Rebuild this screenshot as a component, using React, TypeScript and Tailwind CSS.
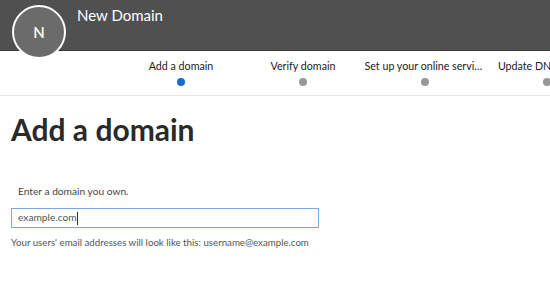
import React from "react";

const steps = [
  { label: "Add a domain", active: true },
  { label: "Verify domain", active: false },
  { label: "Set up your online services", active: false },
  { label: "Update DNS settings", active: false },
];

export default function App() {
  return (
    <div
      className="w-[550px] h-[281px] overflow-hidden bg-white text-[#333]"
      style={{ fontFamily: 'Lato, "Noto Sans", sans-serif' }}
    >
      <div className="relative h-[51px] bg-[#505050] border-b border-[#3c3c3c]">
        <div className="absolute left-[12px] top-[5px] w-[54px] h-[54px] rounded-full bg-[#6b6b6b] border-2 border-white flex items-center justify-center text-white text-[15px] font-semibold">
          N
        </div>
        <div className="pl-[77px] pt-[4px] text-white text-[15px] leading-[22px]">New Domain</div>
      </div>
      <div className="h-[45px] border-b border-[#e8e8e8] flex pl-[120px] overflow-hidden">
        {steps.map((s) => (
          <div key={s.label} className="w-[122px] shrink-0 flex flex-col items-center pt-[8px]">
            <div className="w-[121px] text-center text-[10.7px] leading-[14px] text-[#222] truncate">{s.label}</div>
            <div
              className={
                s.active
                  ? "mt-[5px] w-[8px] h-[8px] rounded-full bg-[#0f6fd8]"
                  : "mt-[5px] w-[8px] h-[8px] rounded-full bg-[#979797]"
              }
            />
          </div>
        ))}
      </div>
      <div className="px-[11px]">
        <h1 className="mt-[15px] text-[30px] leading-[36px] font-bold text-[#2a2a2a]">Add a domain</h1>
        <div className="mt-[37px] pl-[7px] text-[10.2px] leading-[14px] text-[#444]">Enter a domain you own.</div>
        <div className="mt-[10px] w-[308px] h-[20px] border border-[#74a9e6] flex items-center pl-[6px] text-[10.2px] text-[#555]">
          example.com<span className="inline-block w-px h-[13px] bg-[#333]" />
        </div>
        <div className="mt-[7px] text-[9.7px] leading-[14px] text-[#555]">
          Your users' email addresses will look like this: username@example.com
        </div>
      </div>
    </div>
  );
}
